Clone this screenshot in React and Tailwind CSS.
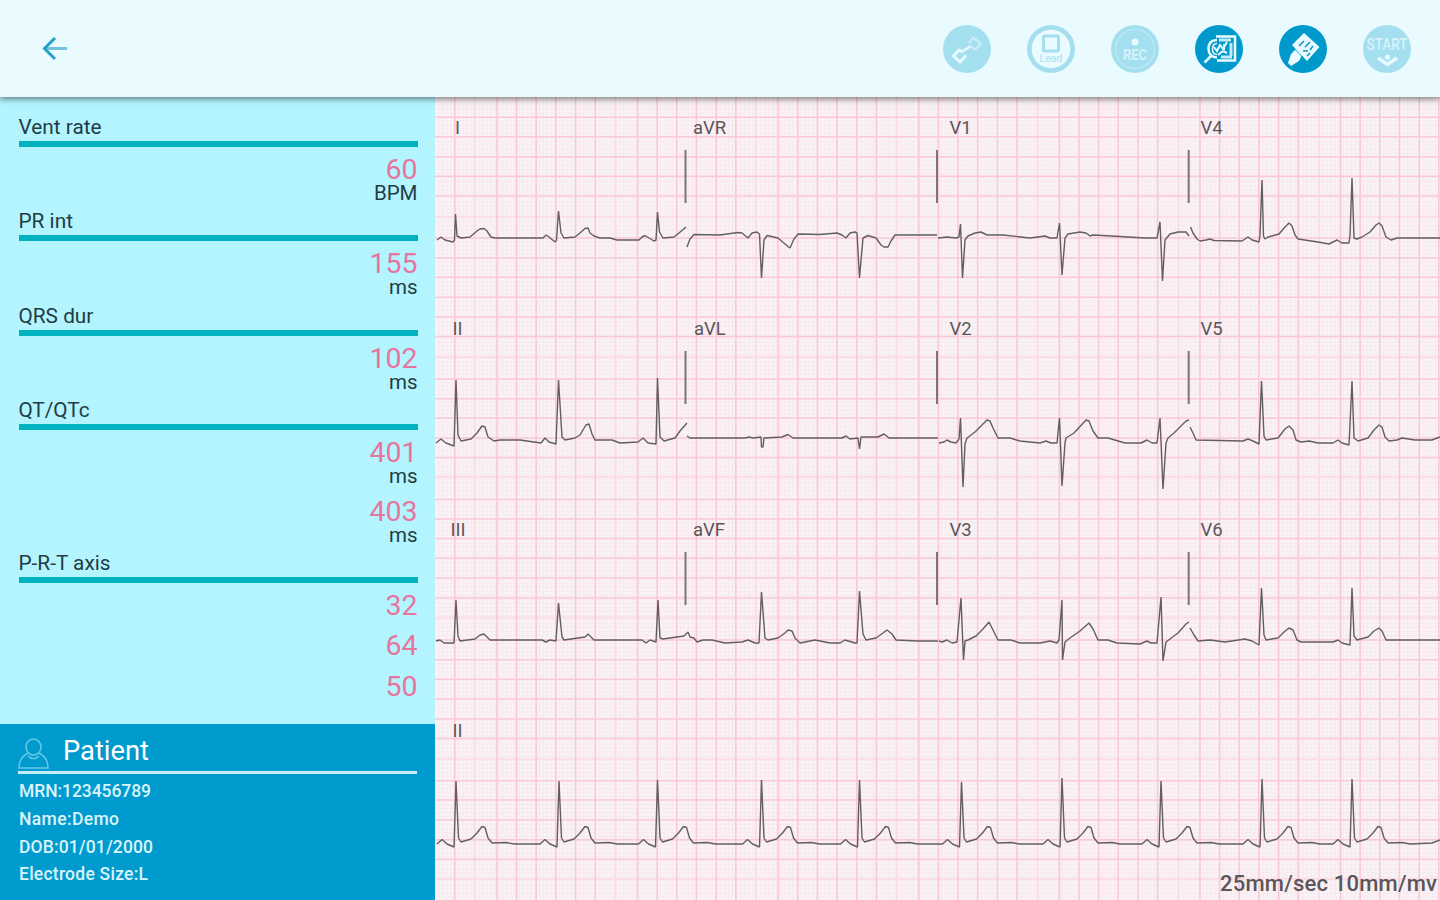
const measurements = [
  { label: "Vent rate", values: [{ value: "60", unit: "BPM" }] },
  { label: "PR int", values: [{ value: "155", unit: "ms" }] },
  { label: "QRS dur", values: [{ value: "102", unit: "ms" }] },
  {
    label: "QT/QTc",
    values: [
      { value: "401", unit: "ms" },
      { value: "403", unit: "ms" },
    ],
  },
  {
    label: "P-R-T axis",
    values: [{ value: "32" }, { value: "64" }, { value: "50" }],
  },
];

const patient = [
  { text: "MRN:123456789", width: 132 },
  { text: "Name:Demo", width: 100 },
  { text: "DOB:01/01/2000", width: 134 },
  { text: "Electrode Size:L", width: 129 },
];

const leads = [
  { name: "I", x: 455, y: 134 },
  { name: "aVR", x: 693, y: 134 },
  { name: "V1", x: 949.5, y: 134 },
  { name: "V4", x: 1200.5, y: 134 },
  { name: "II", x: 452.5, y: 335 },
  { name: "aVL", x: 694, y: 335 },
  { name: "V2", x: 949.5, y: 335 },
  { name: "V5", x: 1200.5, y: 335 },
  { name: "III", x: 450.5, y: 536 },
  { name: "aVF", x: 693, y: 536 },
  { name: "V3", x: 949.5, y: 536 },
  { name: "V6", x: 1200.5, y: 536 },
  { name: "II", x: 452.5, y: 737 },
];

const traces = {
  I: "437,240 441,237 445,240 453,242 454.5,240 455.5,214 457,236 461,238 470,237 477,231 480,229 484,228.5 487,231 491,237 495,238 543,238 546,235 549,237 555,242 556.5,240 558.5,211 561,233 564,238 575,237 580,233 585,228.5 588,228 590,233 594,236 600,238 610,238 617,240 639,240 642,237 645,235.5 649,238 654,241 656,240 657.5,212 659.5,232 663,238 674,237 679,233 686,227",
  aVR: "687,247 690,239 694,234.5 720,235 738,232.5 742,233 748,238 752,233 757,232 759.5,234 761.5,278 764,240 767,235.5 778,238 785,244 790,248 794,239 798,234 820,234.5 837,233 842,235 846,238 850,233 855,232 857,233 859.5,278 863,238 868,235.5 876,238 881,245 884,247 888,247 891,241 895,235 937,235",
  V1: "938,238 947,237 956,238 959,237 960.5,224 962.5,278 965,240 968,236 975,233 981,232 987,235 1003,235 1030,238 1045,236 1050,238 1057,238 1059.5,223 1062,275 1065,238 1068,234 1080,232 1086,233 1090,236 1093,235 1120,236.5 1145,238 1157,238 1160,222 1162.5,281 1165,240 1170,234 1178,232 1186,232 1189,236",
  V4: "1190.5,227 1193,233 1197,239 1200,241 1206,240 1210,239 1214,240.5 1242,241 1245,239 1248,237 1252,240 1259,242 1260,235 1262,180 1263.5,236 1265,239 1268,237 1279,234 1285,227 1289,223 1292,226 1295,235 1298,239 1318,242 1329,244 1337,240 1342,243 1349,243 1350,235 1352,178 1354,238 1357,239 1362,237 1370,232 1376,225 1379,223 1382,226 1386,237 1391,240 1397,238 1440,238",
  II: "436,443 441,439 446,443 454,446 456,380 458,435 461,441 471,439 477,433 482,426 485,427 488,437 494,441 500,440 520,440 541,443 545,438 549,442 556,444 558.5,380 562,437 565,440 575,438 580,435 586,425 589,424 592,434 595,440 612,440 620,443 638,442 643,438 648,443 656,444 657.5,378 660,437 664,441 675,438 680,431 687,423",
  aVL: "687,436 690,438 745,438 749,437 753,438 761,437 761.5,447 763,447 764,438 782,437 788,434.5 793,438 842,438 846,436 850,439 858,438 859.5,449 861,437 878,437 884,434 889,438 938,438",
  V2: "939,443 944,442 947,440 951,442 956,443 959,439 960.5,418 963,487 965,444 967,438 975,432 987,420 990,421 993,428 998,438 1010,438 1020,441 1040,443 1046,441 1051,443 1057,443 1059.5,418 1062,486 1065,443 1066,438 1074,433 1086,420 1089,421 1093,431 1098,438 1108,438 1125,443 1141,443 1147,440 1152,443 1157,443 1160,418 1163,489 1166,443 1168,438 1174,433 1186,421 1189,420",
  V5: "1190,427 1193,433 1196,440 1243,441 1248,439 1253,441 1259,444 1261.5,381 1264,436 1266,440 1278,438 1285,429 1289,426 1293,430 1296,440 1301,442 1309,441 1318,443 1333,443 1338,440 1342,443 1349,445 1352,381 1354,438 1358,441 1368,438 1374,430 1379,425 1382,427 1385,437 1389,441 1397,440 1402,438 1415,440 1432,440 1440,437",
  III: "436,641 440,640 444,643 454,643 456,600 458,636 460,641 475,639 480,635 484,634 490,640 494,640 542,640 546,642 550,640 556,641 558.5,603 562,637 564,640 585,637 588,634 591,637 594,640 642,640 646,643 650,640 656,642 658,600 660,638 663,639 684,636 688,632",
  aVF: "688,632 690,637 694,638 697,642 703,640 712,640 725,643 742,642 748,640 755,643 759,643 761.5,592 765,638 768,640 778,638 785,633 788,630 792,631 795,638 800,643 815,640 830,643 840,643 845,640 855,643 857,643 859.5,591 863,634 866,640 876,638 883,633 887,630 892,634 896,640 918,641 938,641",
  V3: "939,641 942,642 947,640 952,643 957,642 961,598 963.5,660 965,641 968,640 976,636 983,629 989,622 993,630 998,640 1011,640 1020,643 1040,643 1050,641 1057,643 1059,640 1062,600 1062.5,660 1065,642 1070,638 1080,631 1089,623 1093,629 1098,640 1108,640 1117,643 1140,644 1147,641 1151,643 1157,643 1161,597 1163,661 1166,642 1170,639 1178,633 1186,624 1189,622",
  V6: "1190,628 1194,635 1198,641 1210,640 1225,642 1245,639 1252,641 1259,645 1261.5,588 1264,635 1266,640 1278,638 1284,632 1289,628 1293,630 1297,640 1301,642 1333,642 1338,640 1342,643 1350,645 1352,588 1354,636 1357,640 1368,637 1374,631 1379,628 1382,631 1386,640 1440,640",
};

// Rhythm strip: position and peak of every beat
const beats = [
  [456, 781],
  [559, 781],
  [657.5, 780],
  [761.5, 780],
  [859.5, 780],
  [961.5, 782],
  [1062, 778],
  [1161, 781],
  [1262, 779],
  [1352, 779],
];

const rhythm = beats
  .map(([x, top]) =>
    [
      [-19, 844],
      [-14, 839.5],
      [-9, 844],
      [-2, 847],
      [0, top],
      [2.5, 838],
      [5, 842],
      [15, 839],
      [21, 833],
      [26, 826.5],
      [29, 827.5],
      [32, 838],
      [36, 843],
      [50, 842.5],
      [58, 844],
    ]
      .map(([dx, y]) => `${x + dx},${y}`)
      .join(" ")
  )
  .join(" ");

const majorX = [454.7];
for (let start = 497; start < 1440; start += 140.6) {
  [0, 19.6, 39.2, 58.8, 78.6, 98.2].forEach((d) => majorX.push(start + d));
}
const faintX = [474.7, 615.4, 756, 896.6, 1037.6, 1178.4, 1319];

const majorY = [
  117.3, 136.7, 156.7, 176.3, 195.7, 238, 258, 277.3, 297.3, 317, 336.5, 379,
  398.7, 418, 438, 457.5, 499.5, 519, 538.5, 558, 577.7, 597.7, 640, 659.7,
  679.3, 699, 719, 738.5, 780.7, 800, 820, 839.7, 859.3,
];
const faintY = [216.7, 357, 477, 617.5, 759, 879];

const minorX = [];
for (let x = 439; x < 1440; x += 4.02) minorX.push(x);
const minorY = [];
for (let y = 101; y < 900; y += 4.02) minorY.push(y);

const toPath = (xs, ys) =>
  xs.map((x) => `M${x} 97V900`).join("") +
  ys.map((y) => `M435 ${y}H1440`).join("");

const RoundButton = ({ label, active, children }) => (
  <button
    type="button"
    aria-label={label}
    className={`h-12 w-12 rounded-full ${
      active ? "bg-[#0099cc]" : "bg-[#a4dff0]"
    }`}
  >
    <svg
      viewBox="0 0 48 48"
      className="h-12 w-12 overflow-visible"
      fill="none"
      stroke="#eafbff"
      strokeWidth="2"
    >
      {children}
    </svg>
  </button>
);

const Header = () => (
  <header className="relative z-10 flex h-[97px] shrink-0 items-center justify-between bg-[#eafbff] pl-[42px] pr-[29.5px] shadow-[0_2px_6px_rgba(0,0,0,0.5)]">
    <button type="button" aria-label="Back">
      <svg
        viewBox="0 0 26 26"
        className="h-[26px] w-[26px]"
        fill="none"
        strokeWidth="3"
      >
        <path d="M4 12.5H25" stroke="#74c3de" />
        <path d="M13 2L2.500 12.500L13 23" stroke="#2a9fcb" />
      </svg>
    </button>

    <div className="flex items-center gap-9">
      <RoundButton label="Connection">
        <path d="M20 26L28 21" strokeWidth="2.5" />
        <path d="M23 30.5L17 37L10.5 31L16 25L20 27" strokeWidth="2.8" />
        <path
          d="M26 18L30.5 12.5L38 19L32 24.5L27 21"
          stroke="#cdeff8"
          strokeWidth="2"
        />
      </RoundButton>
      <RoundButton label="Lead">
        <circle cx="24" cy="24" r="19.3" fill="#eafbff" stroke="none" />
        <rect
          x="16.5"
          y="11"
          width="15"
          height="15"
          rx="1"
          stroke="#a4dff0"
          strokeWidth="3"
        />
        <text
          x="24"
          y="37"
          textAnchor="middle"
          textLength="23"
          lengthAdjust="spacingAndGlyphs"
          fill="#b4e5f3"
          stroke="none"
          className="font-['Roboto',sans-serif] text-[10.5px] font-medium"
        >
          Lead
        </text>
      </RoundButton>
      <RoundButton label="Record">
        <circle cx="24" cy="24" r="19.5" stroke="#b9e8f4" strokeWidth="1.5" />
        <circle cx="24" cy="17" r="3.5" fill="#eafbff" stroke="none" />
        <text
          x="24"
          y="35"
          textAnchor="middle"
          textLength="24"
          lengthAdjust="spacingAndGlyphs"
          fill="#d4f3fa"
          stroke="none"
          className="font-['Roboto',sans-serif] text-[15px] font-bold"
        >
          REC
        </text>
      </RoundButton>
      <RoundButton label="Review" active>
        <path d="M21 11.500H40V35.500H22" strokeWidth="2.5" />
        <path d="M24 15H36M36 18V31M26 32H37" strokeWidth="3" stroke="#c3e9f5" />
        <path
          d="M22 15C15 15 13.500 20 13.500 24C13.500 29 17 32.500 22 32.500"
          strokeWidth="2.5"
        />
        <path d="M22 18.500C18.500 18.500 17.500 21 17.500 24C17.500 27 19 29.500 22 29.500" strokeWidth="1.5" />
        <path d="M16.500 30.500L9.500 37.500" strokeWidth="2.5" />
        <path
          d="M19 22L22 26L25 20L28 24L32 17M23 30L28 26L32 28M29 19V25"
          strokeWidth="2"
        />
      </RoundButton>
      <RoundButton label="Analysis" active>
        <path d="M25 8L40.5 22L28 36L13 20Z" fill="#eafbff" stroke="none" />
        <path
          d="M20 21L25 16M26 22L31 17M24 26L29 26M34 21L31 25M28 31L31 28"
          stroke="#0099cc"
          strokeWidth="1.5"
        />
        <path
          d="M12 29L17 24L23 30L20 36L12 41L9 38Z"
          fill="#eafbff"
          stroke="none"
        />
        <path d="M15.5 24L23.500 32" stroke="#0099cc" strokeWidth="0.8" />
      </RoundButton>
      <RoundButton label="Start">
        <text
          x="24"
          y="25"
          textAnchor="middle"
          textLength="41"
          lengthAdjust="spacingAndGlyphs"
          fill="#d6f3fa"
          stroke="none"
          className="font-['Roboto',sans-serif] text-[16px] font-medium"
        >
          START
        </text>
        <circle cx="24.5" cy="32" r="2.6" fill="#eafbff" stroke="none" />
        <path d="M15 33L24.5 39.500L34 33" strokeWidth="3.5" />
      </RoundButton>
    </div>
  </header>
);

const Measurement = ({ label, values }) => (
  <section className="mb-[5.4px]">
    <h2 className="h-6 text-[20.8px] leading-6 text-[#1f3d45]">{label}</h2>
    <div className="mt-0.5 h-1.5 bg-[#00b2bf]" />
    <div className="mt-[9px] flex flex-col gap-[10.5px] text-right">
      {values.map(({ value, unit }) => (
        <div key={value} className={unit ? "" : "mb-[3.8px]"}>
          <p className="h-[26px] text-[28.5px] leading-[27px] text-[#e6769f]">
            {value}
          </p>
          {unit && (
            <p className="h-[22px] text-[20.5px] leading-[22px] text-[#1f3d45]">
              {unit}
            </p>
          )}
        </div>
      ))}
    </div>
  </section>
);

const PatientPanel = () => (
  <section className="h-[176px] shrink-0 bg-[#009bce] px-[18px] pt-[9px]">
    <div className="flex h-[38px] items-center">
      <svg
        viewBox="0 0 32 32"
        className="mt-1 h-8 w-8"
        fill="none"
        stroke="#6cc8e8"
        strokeWidth="1.4"
      >
        <ellipse cx="15.5" cy="9" rx="7.5" ry="8" />
        <path d="M10 15C4 18 1 22 1 30H30C30 22 27 18 21 15" />
        <path d="M10 18C13 21.500 18 21.500 21 18" />
      </svg>
      <h2 className="-mt-0.5 ml-[13px] text-[27.3px] leading-8 text-white">
        Patient
      </h2>
    </div>
    <div className="h-[3px] bg-[#c2f1fc]" />
    <ul className="mt-0.5">
      {patient.map(({ text, width }) => (
        <li key={text} className="h-[27.8px]">
          <svg className="block h-7 w-[160px]" fill="#d9f4fc">
            <text
              x="1"
              y="21"
              textLength={width}
              className="text-[17.5px] font-medium"
            >
              {text}
            </text>
          </svg>
        </li>
      ))}
    </ul>
  </section>
);

const EcgChart = () => (
  <svg
    viewBox="435 97 1005 803"
    className="h-[803px] w-[1005px] bg-[#faf3f6]"
    fill="none"
  >
    {/* Graph paper */}
    <path d={toPath(minorX, minorY)} stroke="#f8e9ee" strokeWidth="1" />
    <path d={toPath(faintX, faintY)} stroke="#fadde6" strokeWidth="2" />
    <path d={toPath(majorX, majorY)} stroke="#fac8d7" strokeWidth="1.6" />

    {/* Column separators */}
    {[150, 351, 552].map((y) => (
      <path
        key={y}
        d={`M685.5 ${y}v53M937 ${y}v53M1188.700 ${y}v53`}
        stroke="#7a757a"
        strokeWidth="2"
      />
    ))}

    {/* Waveforms */}
    <g stroke="#625e61" strokeWidth="1.4" strokeLinejoin="bevel">
      {Object.entries(traces).map(([name, points]) => (
        <polyline key={name} points={points} />
      ))}
      <polyline points={`${rhythm} 1432,843 1440,840`} />
    </g>

    <g fill="#5a565a" className="text-[18.5px]">
      {leads.map(({ name, x, y }) => (
        <text key={`${name}-${y}`} x={x} y={y}>
          {name}
        </text>
      ))}
    </g>
    <text
      x="1220"
      y="891"
      textLength="217"
      fill="#5a565a"
      className="text-[22px] font-medium"
    >
      25mm/sec 10mm/mv
    </text>
  </svg>
);

const App = () => (
  <div className="flex h-[900px] w-[1440px] flex-col overflow-hidden font-['Roboto',sans-serif]">
    <Header />
    <main className="flex min-h-0 flex-1">
      <aside className="flex w-[435px] shrink-0 flex-col bg-[#b3f4fe]">
        <div className="min-h-0 flex-1 pl-[18.5px] pr-[17.5px] pt-[18px]">
          {measurements.map((item) => (
            <Measurement key={item.label} {...item} />
          ))}
        </div>
        <PatientPanel />
      </aside>
      <EcgChart />
    </main>
  </div>
);

export default App;
